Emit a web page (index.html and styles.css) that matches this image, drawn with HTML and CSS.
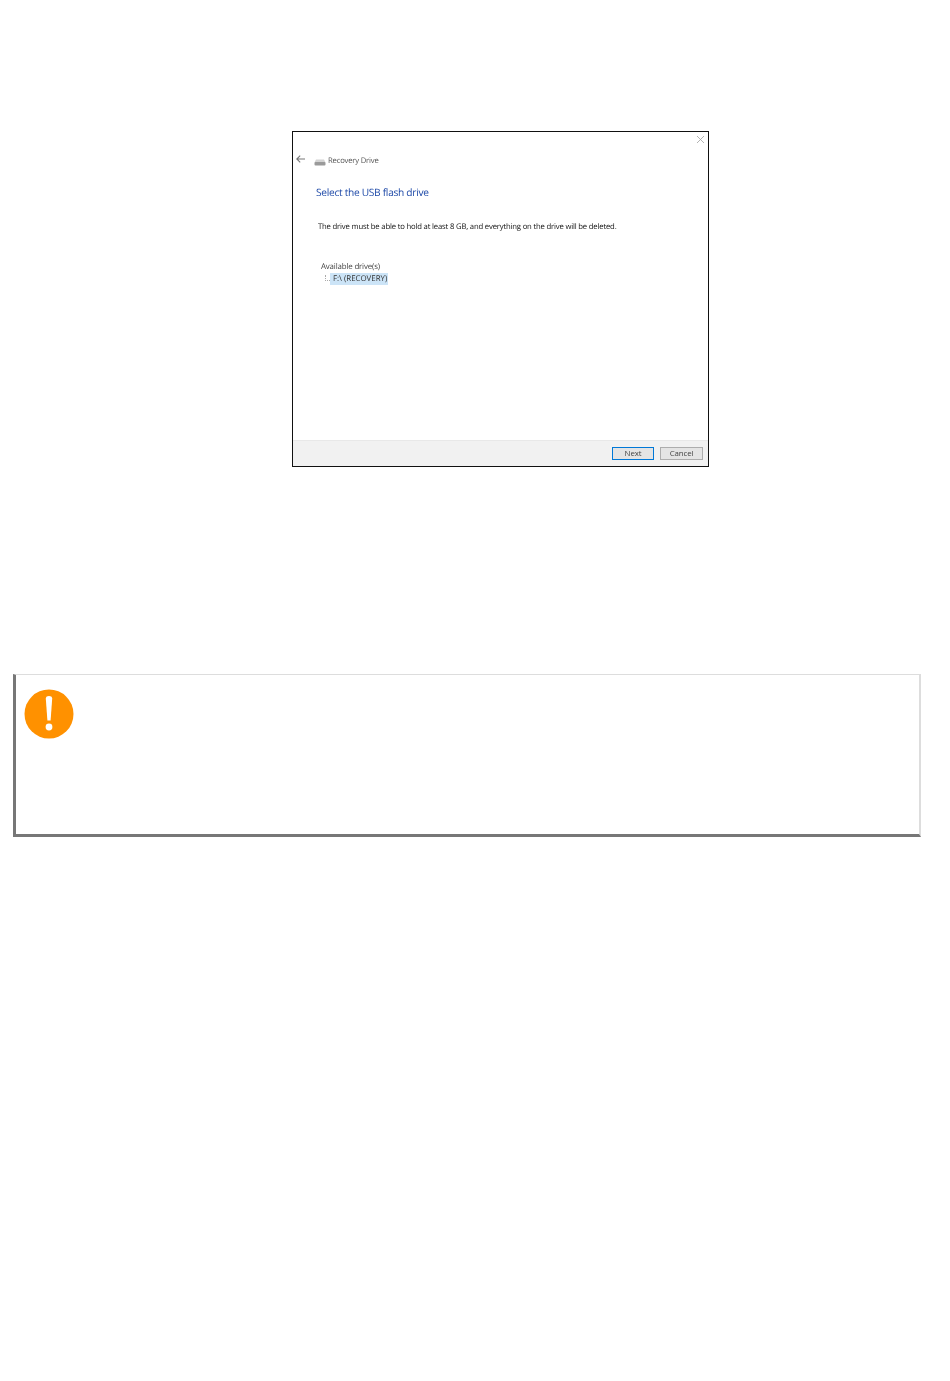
FILE: index.html
```html
<!DOCTYPE html>
<html lang="en">
<head>
  <meta charset="UTF-8" />
  <title>Recovery Drive</title>
  <link rel="stylesheet" href="styles.css">
</head>
<body>

<div class="dialog">
  <div class="dialog-body">
    <div class="close-row">
      <svg class="close-icon" width="7" height="7" viewBox="0 0 7 7"><path d="M0 0L7 7M7 0L0 7" stroke="#a0a0a0" stroke-width="0.8" fill="none"/></svg>
    </div>
    <div class="title-row">
      <svg class="back-icon" width="9" height="8" viewBox="0 0 9 8"><path d="M9 4H1M4.2 0.6L0.8 4L4.2 7.4" stroke="#777" stroke-width="1.1" fill="none"/></svg>
      <svg class="drive-icon" width="12" height="8" viewBox="0 0 12 8">
        <path d="M2 1.5H10L11.5 4.5H0.5Z" fill="#d4d4d4"/>
        <rect x="0.5" y="4" width="11" height="3.5" rx="1" fill="#9a9a9a"/>
      </svg>
      <span class="app-name">Recovery Drive</span>
    </div>
    <h2 class="heading">Select the USB flash drive</h2>
    <p class="intro">The drive must be able to hold at least 8 GB, and everything on the drive will be deleted.</p>
    <div class="drives">
      <div class="drives-label">Available drive(s)</div>
      <div class="drive-row">
        <span class="tree-line"></span>
        <span class="drive-item">F:\ (RECOVERY)</span>
      </div>
    </div>
  </div>
  <div class="dialog-footer">
    <button class="btn btn-default">Next</button>
    <button class="btn">Cancel</button>
  </div>
</div>

<div class="note">
  <svg class="note-icon" width="50" height="50" viewBox="0 0 50 50">
    <circle cx="25" cy="25" r="24.5" fill="#ff9100"/>
    <path d="M21.8 9.5C21.8 7.8 23.2 7 25 7C26.8 7 28.2 7.8 28.2 9.5L26.6 31.5H23.4Z" fill="#fff"/>
    <circle cx="25" cy="38" r="3.4" fill="#fff"/>
  </svg>
</div>

</body>
</html>
```

FILE: styles.css
```css
* {
  box-sizing: border-box;
}

body {
  margin: 0;
  padding: 131px 29px 0 13px;
  background: #ffffff;
  font-family: "Open Sans", sans-serif;
  text-rendering: geometricPrecision;
}

.dialog {
  width: 417px;
  height: 336px;
  margin-left: 279px;
  border: 1px solid #111111;
  display: flex;
  flex-direction: column;
  background: #ffffff;
}

.dialog-body {
  flex-grow: 1;
  padding: 0 3px;
}

.close-row {
  display: flex;
  justify-content: flex-end;
  padding: 4px 1px 0 0;
  height: 14px;
}

.title-row {
  display: flex;
  align-items: center;
  margin-top: 7px;
  height: 12px;
}

.back-icon {
  margin-right: 9px;
}

.drive-icon {
  margin-top: 5px;
  margin-right: 2px;
}

.app-name {
  margin-top: 4px;
  font-size: 7.7px;
  letter-spacing: -0.2px;
  color: #555555;
  filter: blur(0.3px);
}

.heading {
  margin: 20px 0 0 20px;
  font-size: 10.2px;
  letter-spacing: -0.3px;
  line-height: 14px;
  font-weight: 400;
  color: #1f4aa8;
  filter: blur(0.25px);
}

.intro {
  margin: 22px 0 0 22px;
  font-size: 7.7px;
  letter-spacing: -0.175px;
  line-height: 12px;
  color: #111111;
  filter: blur(0.25px);
}

.drives {
  margin: 29px 0 0 25px;
  font-size: 7.9px;
  letter-spacing: -0.16px;
  line-height: 11px;
  color: #444444;
  filter: blur(0.25px);
}

.drive-row {
  display: flex;
  align-items: center;
}

.tree-line {
  width: 5px;
  height: 6px;
  margin: 0 0 3px 4px;
  border-left: 1px dotted #aaaaaa;
  border-bottom: 1px dotted #aaaaaa;
}

.drive-item {
  background: #cce4f7;
  padding: 0 1px 0 3px;
  letter-spacing: -0.02px;
  line-height: 12px;
  color: #333333;
}

.dialog-footer {
  height: 26px;
  background: #f1f1f1;
  border-top: 1px solid #e8e8e8;
  display: flex;
  justify-content: flex-end;
  align-items: center;
  gap: 6px;
  padding: 0 5px 0 0;
}

.btn {
  width: 43px;
  height: 13px;
  padding: 0;
  border: 1px solid #adadad;
  background: #e4e4e4;
  font-family: "Open Sans", sans-serif;
  font-size: 7.9px;
  letter-spacing: -0.12px;
  line-height: 11px;
  color: #444444;
  filter: blur(0.2px);
}

.btn-default {
  width: 42px;
  border: 1px solid #0078d7;
}

.note {
  height: 163px;
  margin-top: 207px;
  border-top: 1px solid #dddddd;
  border-right: 2px solid #dddddd;
  border-left: 3px solid #777777;
  border-bottom: 3px solid #777777;
  padding: 14px 0 0 8px;
}

.note-icon {
  display: block;
}
```
